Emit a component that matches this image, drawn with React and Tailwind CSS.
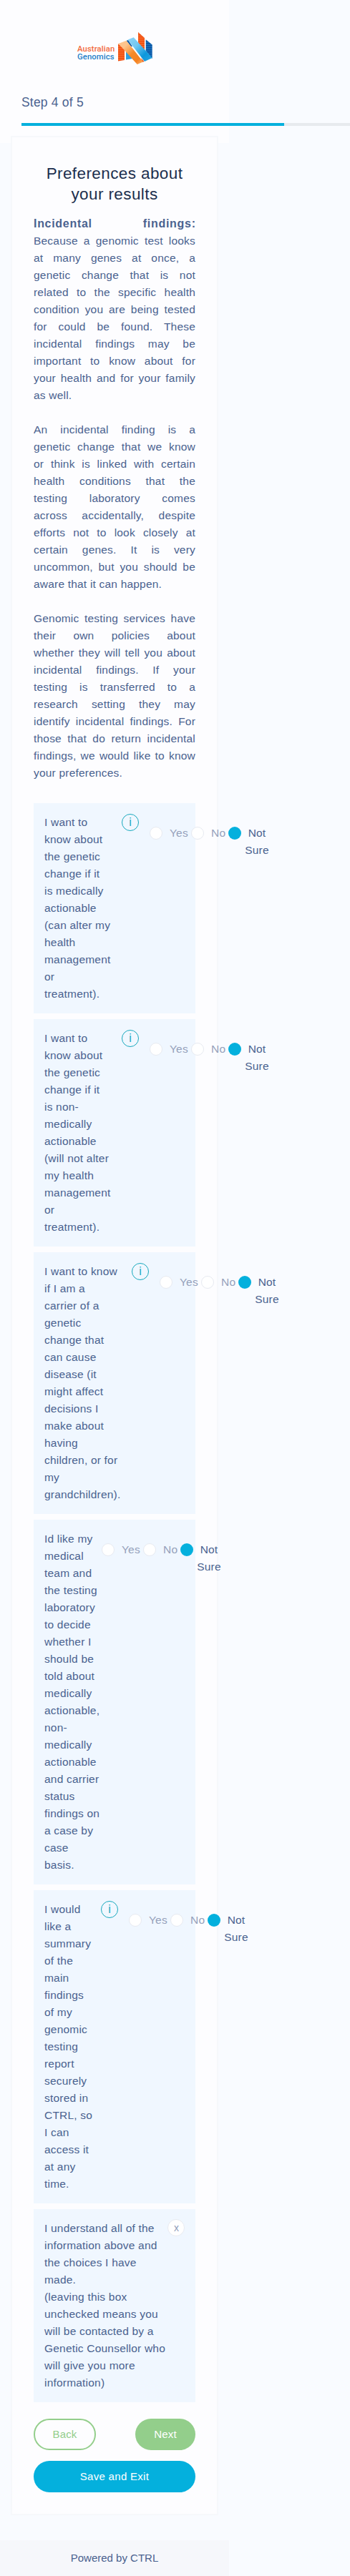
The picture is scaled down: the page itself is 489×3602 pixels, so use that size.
const intro = [
  [
    "Because a genomic test looks",
    "at many genes at once, a",
    "genetic change that is not",
    "related to the specific health",
    "condition you are being tested",
    "for could be found. These",
    "incidental findings may be",
    "important to know about for",
    "your health and for your family",
    "as well.",
  ],
  [
    "An incidental finding is a",
    "genetic change that we know",
    "or think is linked with certain",
    "health conditions that the",
    "testing laboratory comes",
    "across accidentally, despite",
    "efforts not to look closely at",
    "certain genes. It is very",
    "uncommon, but you should be",
    "aware that it can happen.",
  ],
  [
    "Genomic testing services have",
    "their own policies about",
    "whether they will tell you about",
    "incidental findings. If your",
    "testing is transferred to a",
    "research setting they may",
    "identify incidental findings. For",
    "those that do return incidental",
    "findings, we would like to know",
    "your preferences.",
  ],
];

const questions = [
  {
    width: "w-[108px]",
    info: true,
    lines: ["I want to", "know about", "the genetic", "change if it", "is medically", "actionable", "(can alter my", "health", "management", "or", "treatment)."],
  },
  {
    width: "w-[108px]",
    info: true,
    lines: ["I want to", "know about", "the genetic", "change if it", "is non-", "medically", "actionable", "(will not alter", "my health", "management", "or", "treatment)."],
  },
  {
    width: "w-[122px]",
    info: true,
    lines: ["I want to know", "if I am a", "carrier of a", "genetic", "change that", "can cause", "disease (it", "might affect", "decisions I", "make about", "having", "children, or for", "my", "grandchildren)."],
  },
  {
    width: "w-[80px]",
    info: false,
    lines: ["Id like my", "medical", "team and", "the testing", "laboratory", "to decide", "whether I", "should be", "told about", "medically", "actionable,", "non-", "medically", "actionable", "and carrier", "status", "findings on", "a case by", "case", "basis."],
  },
  {
    width: "w-[79px]",
    info: true,
    lines: ["I would", "like a", "summary", "of the", "main", "findings", "of my", "genomic", "testing", "report", "securely", "stored in", "CTRL, so", "I can", "access it", "at any", "time."],
  },
];

const consent = ["I understand all of the", "information above and", "the choices I have", "made.", "(leaving this box", "unchecked means you", "will be contacted by a", "Genetic Counsellor who", "will give you more", "information)"];

function Lines({ lines }) {
  return lines.map((line, i) => (
    <span key={i} className="block whitespace-nowrap">
      {line}
    </span>
  ));
}

function Logo() {
  return (
    <div className="flex items-start">
      <div className="w-[57px] pt-[18px] font-[Roboto,sans-serif] text-[11.3px] leading-[11px] font-medium tracking-[0.1px]">
        <div className="text-[#f26a3d]">Australian</div>
        <div className="text-[#1f7fc8]">Genomics</div>
      </div>
      <svg width="49" height="46" viewBox="0 0 49 46">
        <defs>
          <linearGradient id="orangeBand" x1="0" y1="0" x2="1" y2="1">
            <stop offset="0" stopColor="#fdc48c" />
            <stop offset="0.25" stopColor="#fdc48c" />
            <stop offset="0.55" stopColor="#f68a28" />
            <stop offset="0.8" stopColor="#f58220" />
            <stop offset="1" stopColor="#fbb878" />
          </linearGradient>
          <linearGradient id="blueBand" x1="0" y1="0" x2="1" y2="1">
            <stop offset="0" stopColor="#8fd3f6" />
            <stop offset="0.35" stopColor="#72c8f2" />
            <stop offset="0.7" stopColor="#0c97dc" />
            <stop offset="1" stopColor="#2aa5e2" />
          </linearGradient>
          <pattern id="orangeStripes" width="10" height="3" patternUnits="userSpaceOnUse">
            <rect width="10" height="3" fill="#f9692a" />
            <rect width="10" height="1.4" fill="#ee4d0e" />
          </pattern>
          <pattern id="blueStripes" width="10" height="3" patternUnits="userSpaceOnUse">
            <rect width="10" height="3" fill="#1670bd" />
            <rect width="10" height="1.4" fill="#0a4f9e" />
          </pattern>
        </defs>
        <path d="M0 16 L9 24 L9 39 L0 40.500 Z" fill="url(#orangeStripes)" />
        <path d="M11 24 L20 37 L11 38.500 Z" fill="#2e9fe0" />
        <path d="M28 0 L37 8 L37 25 L28 17 Z" fill="url(#orangeStripes)" />
        <path d="M38.700 10.300 L47.700 17.500 L47.700 37 L38.700 26 Z" fill="url(#blueStripes)" />
        <path d="M11.500 12 L14 11 L20 20 L18 20 Z" fill="#0a5aa8" />
        <path d="M32 36 L36.500 41 L34 42 Z" fill="#e8501a" />
        <path d="M0.500 16 L11.700 11.700 L35 41.500 L26.700 45 Z" fill="url(#orangeBand)" />
        <path d="M13.500 10.500 L21.700 7.300 L47.700 36 L37 41 Z" fill="url(#blueBand)" />
      </svg>
    </div>
  );
}

function Radio({ checked }) {
  return (
    <span
      className={
        checked
          ? "mt-[3px] block size-[18px] shrink-0 rounded-full bg-[#04b0dd]"
          : "mt-[3px] block size-[18px] shrink-0 rounded-full border border-[#e7eaf1] bg-white"
      }
    />
  );
}

function Question({ question }) {
  return (
    <div className="mb-2 flex bg-[#f0f7ff] p-[15px]">
      <div className={`${question.width} shrink-0`}>
        <Lines lines={question.lines} />
      </div>
      {question.info && (
        <span className="mr-[15px] flex size-6 shrink-0 items-center justify-center rounded-full border border-[#17a8bd] text-base tracking-normal text-[#17a8bd]">
          i
        </span>
      )}
      <div className="mt-[15px] flex text-[#95a1bb]">
        <div className="flex w-[58px] shrink-0">
          <Radio />
          <span className="ml-[10px]">Yes</span>
        </div>
        <div className="flex w-[52px] shrink-0">
          <Radio />
          <span className="ml-[10px]">No</span>
        </div>
        <div className="flex shrink-0">
          <Radio checked />
          <span className="ml-1 w-9 text-center text-[#4a628f]">
            Not
            <br />
            Sure
          </span>
        </div>
      </div>
    </div>
  );
}

export default function App() {
  return (
    <div className="h-[3602px] w-[489px] overflow-hidden bg-[#f9fbff] font-['Liberation_Sans',Arial,sans-serif] text-[15.5px] leading-6 tracking-[0.2px] text-[#4a628f]">
      <header className="h-[200px] w-[320px] bg-[#fdfdff]">
        <div className="flex h-[131px] pt-[45px] pl-[108px]">
          <Logo />
        </div>
        <div className="pl-[30px] text-[17.5px] leading-6">Step 4 of 5</div>
        <div className="mt-[17px] ml-[30px] h-1 w-[459px] bg-[#e7eaee]">
          <div className="h-1 w-[367px] bg-[#04b0dd]" />
        </div>
      </header>

      <main className="relative -mt-[10px] ml-[15px] h-[3327px] w-[290px] border-2 border-[#f6f8fb] bg-[#fdfdff] px-[30px] pt-[37px]">
        <h1 className="text-center text-[22.5px] leading-[28.5px] tracking-[0.4px] text-[#1c2f4e]">
          Preferences about
          <br />
          your results
        </h1>

        <div className="mt-[15px]">
          <div className="flex justify-between text-base leading-6 font-bold tracking-[0.7px]">
            <span>Incidental</span>
            <span className="-mr-[0.7px]">findings:</span>
          </div>
          {intro.map((lines, i) => (
            <p key={i} className="mb-6">
              {lines.map((line, j) => (
                <span
                  key={j}
                  className={
                    j < lines.length - 1
                      ? "block whitespace-nowrap [text-align-last:justify]"
                      : "block whitespace-nowrap"
                  }
                >
                  {line}
                </span>
              ))}
            </p>
          ))}
        </div>

        <div className="mt-[30px]">
          {questions.map((question, i) => (
            <Question key={i} question={question} />
          ))}
          <div className="flex justify-between bg-[#f0f7ff] p-[15px]">
            <div className="w-[170px]">
              <Lines lines={consent} />
            </div>
            <span className="-mt-px flex size-6 shrink-0 items-center justify-center rounded-full border border-[#e7eaf1] bg-white pl-px text-sm text-[#8f9dba]">
              x
            </span>
          </div>
        </div>

        <div className="mt-[23px] flex justify-between text-[15px]">
          <button className="h-11 w-[87px] rounded-full border-2 border-[#93ce8b] text-[#93ce8b]">Back</button>
          <button className="h-11 w-[84px] rounded-full bg-[#93ce8b] text-white">Next</button>
        </div>
        <button className="mt-[15px] block h-11 w-full rounded-full bg-[#04b0dd] text-[15px] tracking-[0.3px] text-white">
          Save and Exit
        </button>
      </main>

      <footer className="mt-[35px] flex h-[50px] w-[320px] items-center justify-center bg-[#f6f7fb] text-[15px] tracking-normal">
        Powered by CTRL
      </footer>
    </div>
  );
}
